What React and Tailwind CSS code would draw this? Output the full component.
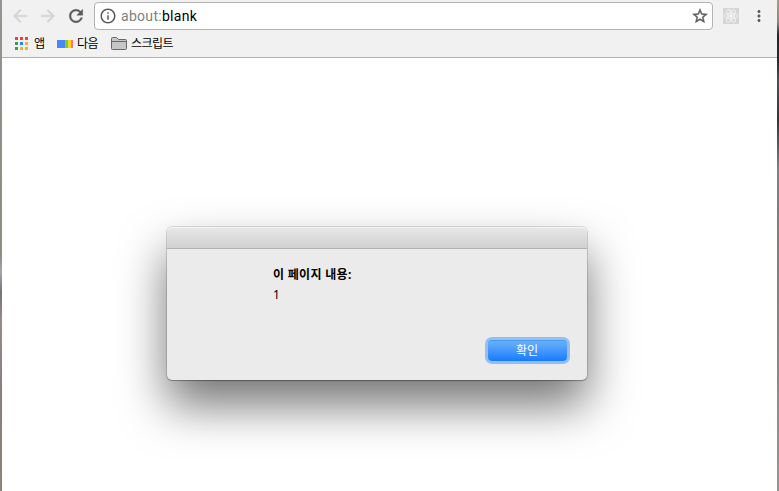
import React from 'react';
import { MdInfoOutline, MdMoreVert } from 'react-icons/md';

function BackIcon({ className }) {
  return (
    <svg className={className} viewBox="0 0 24 24" fill="currentColor" stroke="currentColor" strokeWidth=".5">
      <path d="M20 11H7.83l5.590-5.590L12 4l-8 8 8 8 1.410-1.410L7.830 13H20v-2z" />
    </svg>
  );
}

function ForwardIcon({ className }) {
  return (
    <svg className={className} viewBox="0 0 24 24" fill="currentColor" stroke="currentColor" strokeWidth=".5">
      <path d="M12 4l-1.410 1.410L16.170 11H4v2h12.170l-5.580 5.590L12 20l8-8z" />
    </svg>
  );
}

function ReloadIcon({ className }) {
  return (
    <svg className={className} viewBox="0 0 24 24" fill="currentColor" stroke="currentColor" strokeWidth=".5">
      <path d="M17.650 6.350C16.200 4.900 14.210 4 12 4c-4.420 0-7.990 3.580-7.990 8s3.570 8 7.990 8c3.730 0 6.840-2.550 7.730-6h-2.080c-.820 2.330-3.040 4-5.650 4-3.310 0-6-2.690-6-6s2.690-6 6-6c1.660 0 3.140.69 4.220 1.780L13 11h7V4l-2.350 2.350z" />
    </svg>
  );
}

function StarIcon({ className }) {
  return (
    <svg className={className} viewBox="0 0 24 24" fill="currentColor" stroke="currentColor" strokeWidth=".5">
      <path d="M22 9.240l-7.190-.62L12 2 9.190 8.630 2 9.240l5.460 4.730L5.820 21 12 17.270 18.180 21l-1.630-7.030L22 9.240zM12 15.400l-3.760 2.270 1-4.280-3.320-2.880 4.380-.38L12 6.100l1.710 4.040 4.380.38-3.320 2.880 1 4.280L12 15.400z" />
    </svg>
  );
}

function AppsIcon() {
  const colors = ['#ee4035', '#ee4035', '#ee4035', '#33a05a', '#2a86f3', '#f6b026', '#33a05a', '#f6b026', '#f6b026'];
  return (
    <svg className="ml-[13px] h-[13px] w-[13px] shrink-0" viewBox="0 0 13 13" shapeRendering="crispEdges">
      {colors.map((c, i) => (
        <rect key={i} x={(i % 3) * 5} y={Math.floor(i / 3) * 5} width="3" height="3" fill={c} />
      ))}
    </svg>
  );
}

function FolderIcon() {
  return (
    <svg className="ml-[13px] h-[13px] w-[16px] shrink-0" viewBox="0 0 16 13" fill="#c6c6c6" stroke="#686868">
      <path d="M.5 11.500V1.500Q.5.5 1.500 .5H5.500L7.500 2.500H14.500Q15.500 2.500 15.500 3.500V11.500Q15.500 12.500 14.500 12.500H1.500Q.5 12.500 .5 11.500Z" />
      <path d="M1 4.500H15" fill="none" />
    </svg>
  );
}

function ReactIcon() {
  return (
    <svg className="ml-[10px] h-4 w-4 shrink-0" viewBox="0 0 16 16" fill="none" stroke="#f4f4f4" strokeWidth=".9">
      <rect width="16" height="16" fill="#d5d5d5" stroke="none" />
      <ellipse cx="8" cy="8" rx="7" ry="2.700" />
      <ellipse cx="8" cy="8" rx="7" ry="2.700" transform="rotate(60 8 8)" />
      <ellipse cx="8" cy="8" rx="7" ry="2.700" transform="rotate(120 8 8)" />
      <circle cx="8" cy="8" r="1.500" fill="#fff" stroke="none" />
    </svg>
  );
}

function Toolbar() {
  return (
    <div className="flex h-[32px] items-center text-[#5a5a5a]">
      <BackIcon className="ml-[8px] h-5 w-5 shrink-0 text-[#d3d3d3]" />
      <ForwardIcon className="ml-[8px] h-5 w-5 shrink-0 text-[#d3d3d3]" />
      <ReloadIcon className="ml-[8px] h-5 w-5 shrink-0" />
      <div className="ml-[8px] flex h-[28px] w-[619px] shrink-0 items-center rounded-[4px] border border-[#b4b4b4] bg-white">
        <MdInfoOutline className="ml-[4px] h-[18px] w-[18px] shrink-0" />
        <span className="ml-[4px] font-[Roboto,sans-serif] text-[14px] leading-5 tracking-[0.3px] text-black">
          <span className="text-[#808080]">about:</span>blank
        </span>
        <StarIcon className="mr-[3px] ml-auto h-[18px] w-[18px] shrink-0" />
      </div>
      <ReactIcon />
      <MdMoreVert className="ml-[11px] h-[18px] w-[18px] shrink-0" />
    </div>
  );
}

function Bookmarks() {
  return (
    <div className="flex h-[26px] items-center border-b border-[#b0b0b0] pb-[2px] text-[12px] tracking-[-0.5px] whitespace-nowrap text-black">
      <AppsIcon />
      <span className="ml-[6px] w-[11px]">앱</span>
      <span className="ml-[12px] flex h-2 w-4 shrink-0">
        <span className="w-2 bg-[#4489f7]" />
        <span className="w-[3px] bg-[#7bcf26]" />
        <span className="w-[3px] bg-[#ffd321]" />
        <span className="w-[2px] bg-[#fb7771]" />
      </span>
      <span className="ml-[4px] w-[21px]">다음</span>
      <FolderIcon />
      <span className="ml-[4px]">스크립트</span>
    </div>
  );
}

function AlertDialog() {
  return (
    <div className="flex h-[153px] w-[420px] flex-col rounded-[5px] bg-[#ebebeb] shadow-[0_25px_47px_rgba(0,0,0,0.55),0_0_0_1px_rgba(0,0,0,0.12),0_1px_1px_rgba(0,0,0,0.25)]">
      <div className="h-[22px] shrink-0 rounded-t-[5px] border-b border-b-[#b0b0b0] bg-gradient-to-b from-[#e8e8e8] to-[#d0d0d0] shadow-[inset_0_1px_0_#f3f3f3]" />
      <div className="flex grow flex-col pt-[17px] pl-[106px] text-black">
        <strong className="text-[12px] leading-[18px] font-bold tracking-[0.3px]">이 페이지 내용:</strong>
        <span className="mt-[3px] text-[12px] leading-4">1</span>
        <button className="mt-[37px] mr-[20px] flex h-[21px] w-[79px] items-center justify-center self-end rounded-[4px] bg-gradient-to-b from-[#6bb3fa] to-[#147bff] pr-[1px] text-[12px] leading-none text-white shadow-[inset_0_1px_0_#4499f5,0_0_0_3px_#93c0f1]">
          확인
        </button>
      </div>
    </div>
  );
}

export default function App() {
  return (
    <div className="flex h-[491px] w-[779px] overflow-hidden bg-white font-['Noto_Sans','Noto_Sans_CJK_KR',sans-serif]">
      <div className="w-[2px] shrink-0 bg-[linear-gradient(#969390_0px,#8e8b83_255px,#a5a5ad_272px,#777378_292px,#958b89_320px,#87807e_390px,#90817b_491px)]" />
      <div className="flex w-[775px] shrink-0 flex-col">
        <header className="h-[58px] shrink-0 bg-[#f1f1f1]">
          <Toolbar />
          <Bookmarks />
        </header>
        <main className="grow pt-[169px] pl-[165px]">
          <AlertDialog />
        </main>
      </div>
      <div className="w-[2px] shrink-0 bg-[linear-gradient(#a69b87_0px,#90877a_22px,#26262a_35px,#28292e_60px,#4c5157_80px,#383434_120px,#555b62_145px,#808286_170px,#7c7c80_210px,#857c77_240px,#9a948e_491px)]" />
    </div>
  );
}
